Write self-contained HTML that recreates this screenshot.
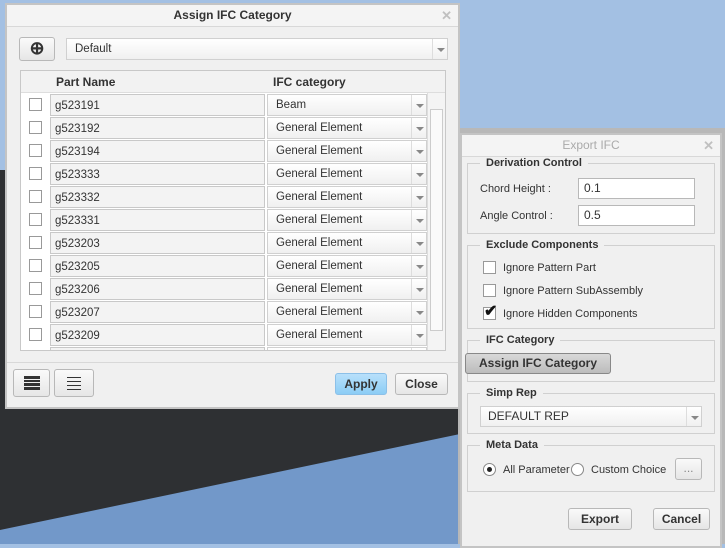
<!DOCTYPE html>
<html><head><meta charset="utf-8"><style>
*{box-sizing:border-box;margin:0;padding:0}
body{width:725px;height:544px;position:relative;overflow:hidden;font-family:"Liberation Sans",Arial,sans-serif;font-size:11px;color:#333;background:#a3c0e3}
.a{position:absolute}
.dlg{background:#f0f0f0;border:2px solid #c4c4c4}
.title{position:absolute;left:0;right:0;top:0;height:22px;border-bottom:1px solid #d8d8d8;text-align:center;line-height:21px;font-size:12px;font-weight:bold;background:#f4f4f4}
.x{position:absolute;right:6px;top:0;color:#c0c0c0;font-weight:bold;font-size:13px}
.btn{position:absolute;border:1px solid #b8b8b8;border-radius:3px;background:linear-gradient(#fafafa,#e6e6e6);text-align:center;font-weight:bold;font-size:12px;color:#333}
.cb{position:absolute;width:13px;height:13px;border:1px solid #999;background:#fff}
.fld{position:absolute;background:#f3f3f3;border:1px solid #c8c8c8;padding-left:4px;padding-top:1px;line-height:20px;font-size:11.5px;color:#333}
.sel{position:absolute;background:linear-gradient(#fff,#f0f0f0);border:1px solid #d0d0d0;padding-left:8px;line-height:20px;font-size:11.5px}
.arr{position:absolute;right:0;top:0;bottom:0;width:15px;border-left:1px solid #ddd}
.arr:after{content:"";position:absolute;left:4px;top:9px;border:4px solid transparent;border-top:4px solid #888;border-bottom:0}
.grp{position:absolute;border:1px solid #d0d0d0}
.gl{position:absolute;top:-7px;left:12px;background:#f0f0f0;padding:0 6px;font-weight:bold;font-size:11px;line-height:13px}
.inp{position:absolute;background:#fff;border:1px solid #b8b8b8;padding-left:5px;line-height:19px;font-size:12px}
.lb{position:absolute;font-size:11px;line-height:14px}
</style></head><body>
<div class="a" style="left:0;top:170px;width:460px;height:374px;background:#2e3033"></div>
<svg class="a" style="left:0;top:400px" width="460" height="144"><polygon points="0,130 460,34 460,144 0,144" fill="#7298c9"/></svg>
<div class="a" style="left:458px;top:128px;width:267px;height:416px;background:#b8b8b8"></div>

<div class="a dlg" style="left:5px;top:3px;width:455px;height:406px">
 <div class="title">Assign IFC Category<span class="x">✕</span></div>
 <div class="btn" style="left:12px;top:32px;width:36px;height:24px;font-size:18px;line-height:21px">⊕</div>
 <div class="sel" style="left:59px;top:33px;width:382px;height:22px;line-height:20px">Default<div class="arr"></div></div>
 <div class="a" id="tbl" style="left:13px;top:65px;width:426px;height:281px;border:1px solid #c8c8c8;background:#fff;overflow:hidden">
  <div class="a" style="left:0;top:0;width:426px;height:22px;background:#f2f2f2;border-bottom:1px solid #ddd;font-weight:bold;font-size:12px;line-height:22px">
   <span class="a" style="left:35px">Part Name</span><span class="a" style="left:252px">IFC category</span></div>
  <div class="a" style="left:406px;top:22px;width:19px;height:258px;background:#f4f4f4;border-left:1px solid #ddd"></div>
  <div class="a" style="left:409px;top:38px;width:13px;height:222px;border:1px solid #ccc;background:#fafafa"></div>
 </div>
 <div class="a" style="left:0;top:357px;width:451px;border-top:1px solid #d8d8d8"></div>
 <div class="btn" style="left:6px;top:364px;width:37px;height:28px"><svg width="16" height="16" style="margin-top:5px"><g fill="#333"><rect x="0" y="1" width="16" height="3"/><rect x="0" y="5" width="16" height="2"/><rect x="0" y="8" width="16" height="3"/><rect x="0" y="12" width="16" height="3"/></g></svg></div>
 <div class="btn" style="left:47px;top:364px;width:40px;height:28px"><svg width="16" height="16" style="margin-top:5px"><g fill="#333"><rect x="1" y="2" width="14" height="1"/><rect x="1" y="6" width="14" height="1"/><rect x="1" y="10" width="14" height="1"/><rect x="1" y="14" width="14" height="1"/></g></svg></div>
 <div class="btn" style="left:328px;top:368px;width:52px;height:22px;line-height:20px;background:linear-gradient(#b8e0fb,#8ccdf5);border-color:#8cc0e8">Apply</div>
 <div class="btn" style="left:388px;top:368px;width:53px;height:22px;line-height:20px">Close</div>
</div>

<div class="a dlg" style="left:460px;top:133px;width:262px;height:415px">
 <div class="title" style="color:#aaa;font-weight:normal">Export IFC<span class="x">✕</span></div>
 <div class="grp" style="left:5px;top:28px;width:248px;height:71px"><span class="gl">Derivation Control</span></div>
 <div class="lb" style="left:18px;top:47px">Chord Height :</div>
 <div class="inp" style="left:116px;top:43px;width:117px;height:21px">0.1</div>
 <div class="lb" style="left:18px;top:74px">Angle Control :</div>
 <div class="inp" style="left:116px;top:70px;width:117px;height:21px">0.5</div>
 <div class="grp" style="left:5px;top:110px;width:248px;height:84px"><span class="gl">Exclude Components</span></div>
 <div class="cb" style="left:21px;top:126px"></div><div class="lb" style="left:41px;top:126px">Ignore Pattern Part</div>
 <div class="cb" style="left:21px;top:149px"></div><div class="lb" style="left:41px;top:149px">Ignore Pattern SubAssembly</div>
 <div class="cb" style="left:21px;top:172px"></div><div class="a" style="left:22px;top:166px;font-size:16px;font-weight:bold;color:#111">✔</div><div class="lb" style="left:41px;top:172px">Ignore Hidden Components</div>
 <div class="grp" style="left:5px;top:205px;width:248px;height:42px"><span class="gl">IFC Category</span></div>
 <div class="btn" style="left:3px;top:218px;width:146px;height:21px;line-height:19px;background:linear-gradient(#d8d8d8,#bcbcbc);border-color:#888">Assign IFC Category</div>
 <div class="grp" style="left:5px;top:258px;width:248px;height:41px"><span class="gl">Simp Rep</span></div>
 <div class="sel" style="left:18px;top:271px;width:222px;height:21px;line-height:19px;padding-left:7px;font-size:12px">DEFAULT REP<div class="arr"></div></div>
 <div class="grp" style="left:5px;top:310px;width:248px;height:47px"><span class="gl">Meta Data</span></div>
 <div class="a" style="left:21px;top:328px;width:13px;height:13px;border:1px solid #888;border-radius:50%;background:#fff"><div style="margin:3px;width:5px;height:5px;border-radius:50%;background:#222"></div></div>
 <div class="lb" style="left:41px;top:328px">All Parameter</div>
 <div class="a" style="left:109px;top:328px;width:13px;height:13px;border:1px solid #888;border-radius:50%;background:#fff"></div>
 <div class="lb" style="left:129px;top:328px">Custom Choice</div>
 <div class="btn" style="left:213px;top:323px;width:27px;height:22px;font-weight:normal;color:#888;line-height:18px">...</div>
 <div class="btn" style="left:106px;top:373px;width:64px;height:22px;line-height:20px">Export</div>
 <div class="btn" style="left:191px;top:373px;width:57px;height:22px;line-height:20px">Cancel</div>
</div>
<script>
var n=["g523191","g523192","g523194","g523333","g523332","g523331","g523203","g523205","g523206","g523207","g523209",""];
var h="";
n.forEach(function(s,i){var t=22+i*23;
h+='<div class="cb" style="left:8px;top:'+(t+5)+'px"></div>';
h+='<div class="fld" style="left:29px;top:'+(t+1)+'px;width:215px;height:22px">'+s+'</div>';
h+='<div class="sel" style="left:246px;top:'+(t+1)+'px;width:160px;height:22px">'+(i==0?"Beam":(s?"General Element":""))+'<div class="arr"></div></div>';});
document.getElementById('tbl').insertAdjacentHTML('beforeend',h);
</script>
</body></html>
